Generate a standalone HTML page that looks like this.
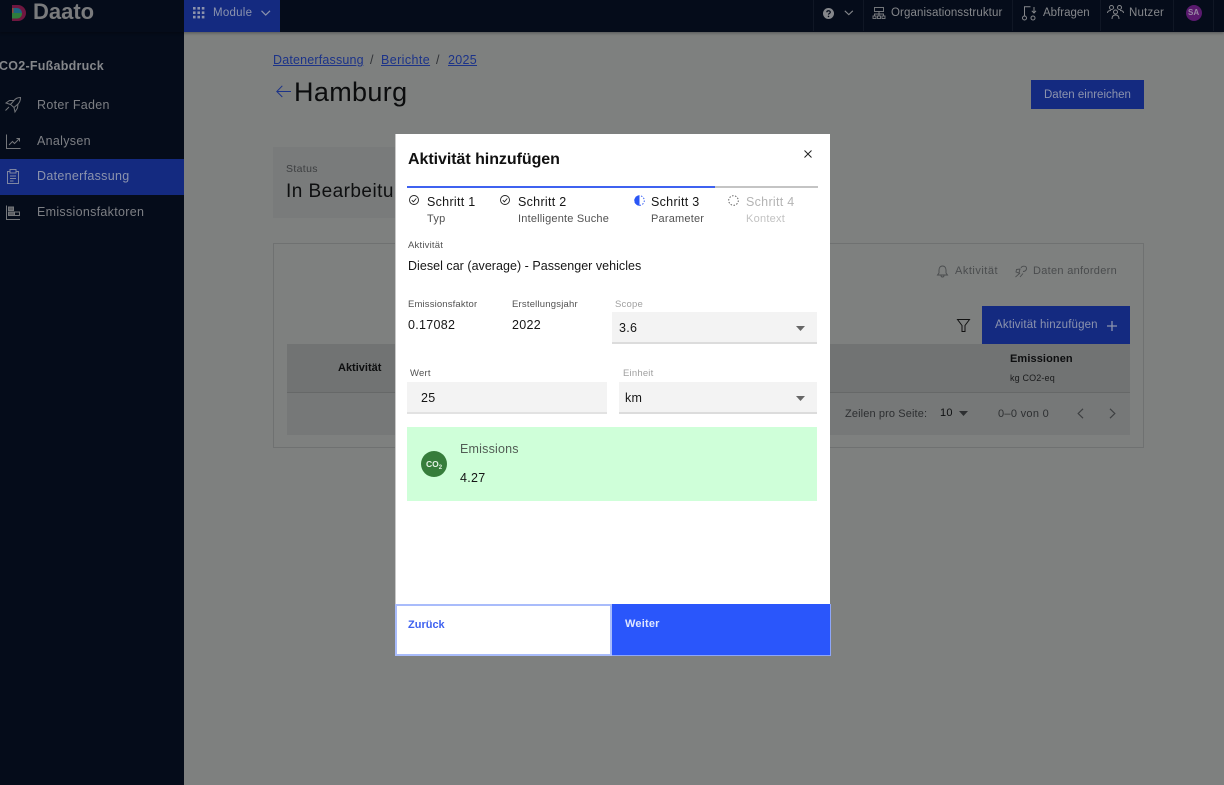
<!DOCTYPE html>
<html lang="de"><head><meta charset="utf-8"><title>Daato</title>
<style>
*{box-sizing:border-box}
html,body{margin:0;padding:0;width:1224px;height:785px;overflow:hidden;background:#7e807f}
body{font-family:"Liberation Sans",sans-serif;position:relative}
.t{position:absolute;white-space:nowrap;line-height:1}
.b{position:absolute}
svg{position:absolute;overflow:visible}
</style></head><body>

<!-- Background page -->
<div class="b" style="left:0;top:0;width:184px;height:785px;background:#050c1a"></div>
<div class="b" style="left:0;top:0;width:1224px;height:32px;background:#050c1a;box-shadow:0 1px 3px rgba(0,0,0,.35)"></div>
<div class="b" style="left:184px;top:0;width:96px;height:32px;background:#142a80"></div>

<!-- logo -->
<svg style="left:12px;top:5px" width="14" height="16" viewBox="0 0 14 16">
<path d="M0 0H6A8 8 0 0 1 6 16H0Z" fill="#6f1740"/>
<path d="M0 3H5A5 5 0 0 1 10 8H0Z" fill="#1d6480"/>
<path d="M0 8H10A5 5 0 0 1 5 13.500H0Z" fill="#2f7d3c"/>
<path d="M0 3H1.500V8H0Z" fill="#8f4a34"/>
</svg>
<div class="t" style="left:33px;top:1px;font-size:22px;font-weight:700;color:#7a7b7d">Daato</div>

<!-- module -->
<svg style="left:193px;top:7px" width="12" height="12" fill="#8c93ad">
<rect x="0" y="0" width="2.600" height="2.600"/><rect x="4.400" y="0" width="2.600" height="2.600"/><rect x="8.800" y="0" width="2.600" height="2.600"/>
<rect x="0" y="4.400" width="2.600" height="2.600"/><rect x="4.400" y="4.400" width="2.600" height="2.600"/><rect x="8.800" y="4.400" width="2.600" height="2.600"/>
<rect x="0" y="8.800" width="2.600" height="2.600"/><rect x="4.400" y="8.800" width="2.600" height="2.600"/><rect x="8.800" y="8.800" width="2.600" height="2.600"/>
</svg>
<div class="t" style="left:213px;top:8px;font-size:11.500px;letter-spacing:.25px;color:#8c93ad">Module</div>
<svg style="left:261px;top:10px" width="10" height="6" fill="none" stroke="#8c93ad" stroke-width="1.200"><path d="M.5 .8 4.700 5 9 .8"/></svg>

<!-- top-right -->
<div class="b" style="left:813px;top:0;width:1px;height:31px;background:#101725"></div>
<div class="b" style="left:863px;top:0;width:1px;height:31px;background:#101725"></div>
<div class="b" style="left:1012px;top:0;width:1px;height:31px;background:#101725"></div>
<div class="b" style="left:1100px;top:0;width:1px;height:31px;background:#101725"></div>
<div class="b" style="left:1173px;top:0;width:1px;height:31px;background:#101725"></div>
<div class="b" style="left:1213px;top:0;width:1px;height:31px;background:#101725"></div>
<svg style="left:823px;top:8px" width="11" height="11"><circle cx="5.500" cy="5.500" r="5.500" fill="#85878b"/><path d="M3.800 4.300C3.800 2.200 7.300 2.300 7.300 4.200 7.300 5.400 5.500 5.400 5.500 6.600" fill="none" stroke="#050c1a" stroke-width="1.200"/><circle cx="5.500" cy="8.400" r=".8" fill="#050c1a"/></svg>
<svg style="left:844px;top:10px" width="10" height="6" fill="none" stroke="#85878b" stroke-width="1.100"><path d="M.8 .8 4.800 4.600 8.800 .8"/></svg>
<svg style="left:873px;top:7px" width="12" height="12" fill="none" stroke="#7f8184" stroke-width=".9">
<rect x="1.500" y=".5" width="9" height="4"/><path d="M6 4.500V7M1.500 9V7H10.500V9M6 7V9"/><rect x="0" y="9" width="3" height="2.500"/><rect x="4.500" y="9" width="3" height="2.500"/><rect x="9" y="9" width="3" height="2.500"/></svg>
<div class="t" style="left:891px;top:8px;font-size:11.500px;letter-spacing:.1px;color:#85878b">Organisationsstruktur</div>
<svg style="left:1022px;top:6px" width="14" height="15" fill="none" stroke="#85878b" stroke-width="1">
<path d="M2.500 9.500V.8H8.500M12 1V7M9.800 4.800 12 7 14 4.800"/><circle cx="2.500" cy="12" r="2"/><circle cx="11" cy="12" r="2"/></svg>
<div class="t" style="left:1043px;top:8px;font-size:11.500px;letter-spacing:0;color:#85878b">Abfragen</div>
<svg style="left:1107px;top:5px" width="17" height="15" fill="none" stroke="#85878b" stroke-width="1">
<circle cx="4.500" cy="2.500" r="2"/><circle cx="12.500" cy="2.500" r="2"/><circle cx="8.500" cy="7" r="2"/><path d="M.5 8C.5 6 2 5.500 4 5.500M16.500 8C16.500 6 15 5.500 13 5.500M5 14C5 11 6.500 10 8.500 10S12 11 12 14"/></svg>
<div class="t" style="left:1129px;top:8px;font-size:11.500px;letter-spacing:.2px;color:#85878b">Nutzer</div>
<div class="b" style="left:1186px;top:5px;width:16px;height:16px;border-radius:50%;background:#5a1a6e"></div>
<div class="t" style="left:1188px;top:9px;font-size:8px;font-weight:700;color:#9a8aa4">SA</div>

<!-- sidebar -->
<div class="t" style="left:-1px;top:60px;font-size:12.500px;font-weight:700;letter-spacing:.25px;color:#85878b">CO2-Fußabdruck</div>
<div class="b" style="left:0;top:159px;width:184px;height:36px;background:#142a80"></div>
<div class="t" style="left:37px;top:99px;font-size:12.500px;letter-spacing:.3px;color:#7d7f84">Roter Faden</div>
<div class="t" style="left:37px;top:135px;font-size:12.500px;letter-spacing:.3px;color:#7d7f84">Analysen</div>
<div class="t" style="left:37px;top:170px;font-size:12.500px;letter-spacing:.3px;color:#8c93ad">Datenerfassung</div>
<div class="t" style="left:37px;top:206px;font-size:12.500px;letter-spacing:.3px;color:#7d7f84">Emissionsfaktoren</div>
<svg style="left:5px;top:97px" width="16" height="16" fill="none" stroke="#75777b" stroke-width="1"><path d="M15.500 .5C12.500 .5 10.500 1.500 9 3.500L5.500 7.500 9 10.500 13 7C15 5 15.500 3 15.500 .5ZM5.500 7.500 1 6 4.500 3.500H9M9 10.500 10 15 12.500 11 13 7M4 10 .5 13.500"/></svg>
<svg style="left:6px;top:134px" width="15" height="15" fill="none" stroke="#75777b" stroke-width="1"><path d="M.5 .5V14.500H14.500"/><path d="M3 11 6.500 7.500 8.500 9.500 13.500 4.500M10.500 4.500H13.500V7.500"/></svg>
<svg style="left:7px;top:169px" width="13" height="15" fill="none" stroke="#7f86a2" stroke-width="1"><rect x=".5" y="2.500" width="11" height="12"/><rect x="3" y=".5" width="6" height="3.500" fill="#142a80"/><path d="M3 7H9M3 9.500H9M3 12H6.500"/></svg>
<svg style="left:6px;top:205px" width="14" height="15" fill="none" stroke="#75777b" stroke-width="1"><path d="M.5 .5V14.500H14"/><rect x="2.500" y="2" width="5" height="3.500" fill="#5c5e63"/><rect x="2.500" y="7" width="11" height="3.500"/><rect x="2.500" y="7" width="6" height="3.500" fill="#5c5e63"/></svg>

<!-- breadcrumb -->
<div class="t" style="left:273px;top:54px;font-size:12.500px;letter-spacing:.18px;color:#1c3389;text-decoration:underline">Datenerfassung</div>
<div class="t" style="left:370px;top:54px;font-size:12.500px;color:#303236">/</div>
<div class="t" style="left:381px;top:54px;font-size:12.500px;letter-spacing:.4px;color:#1c3389;text-decoration:underline">Berichte</div>
<div class="t" style="left:436px;top:54px;font-size:12.500px;color:#303236">/</div>
<div class="t" style="left:448px;top:54px;font-size:12.500px;letter-spacing:.3px;color:#1c3389;text-decoration:underline">2025</div>
<svg style="left:276px;top:85px" width="15" height="13" fill="none" stroke="#1c3389" stroke-width="1"><path d="M15 6.500H.8M6.300 .8 .8 6.500 6.300 12"/></svg>
<div class="t" style="left:294px;top:79px;font-size:27px;letter-spacing:.35px;color:#0b0c0d">Hamburg</div>
<div class="b" style="left:1031px;top:80px;width:113px;height:29px;background:#142a80"></div>
<div class="t" style="left:1044px;top:90px;font-size:11.500px;letter-spacing:0;color:#8c93ad">Daten einreichen</div>

<!-- status -->
<div class="b" style="left:273px;top:147px;width:130px;height:71px;background:#797b7b"></div>
<div class="t" style="left:286px;top:164px;font-size:10.500px;letter-spacing:.35px;color:#3c3e40">Status</div>
<div class="t" style="left:286px;top:182px;font-size:19px;letter-spacing:.45px;color:#0e0f10">In Bearbeitung</div>

<!-- table card -->
<div class="b" style="left:273px;top:243px;width:871px;height:205px;border:1px solid #6f7171"></div>
<div class="b" style="left:287px;top:344px;width:843px;height:48px;background:#717373"></div>
<div class="b" style="left:287px;top:392px;width:843px;height:1px;background:#666868"></div>
<div class="b" style="left:287px;top:393px;width:843px;height:42px;background:#767878"></div>
<div class="t" style="left:338px;top:363px;font-size:11px;font-weight:700;color:#0d0e0f">Aktivität</div>
<div class="t" style="left:1010px;top:354px;font-size:11px;font-weight:700;letter-spacing:.1px;color:#0d0e0f">Emissionen</div>
<div class="t" style="left:1010px;top:374px;font-size:9px;letter-spacing:.15px;color:#1a1b1c">kg CO2-eq</div>

<svg style="left:937px;top:265px" width="11" height="13" fill="none" stroke="#4a4c4e" stroke-width=".9"><path d="M.5 10H10.500L9 8V5C9 2.500 7.500 1 5.500 1S2 2.500 2 5V8ZM4 10.500C4 12.500 7 12.500 7 10.500"/></svg>
<div class="t" style="left:955px;top:266px;font-size:11px;letter-spacing:.5px;color:#4a4c4e">Aktivität</div>
<svg style="left:1015px;top:265px" width="12" height="13" fill="none" stroke="#4a4c4e" stroke-width=".9"><path d="M6 3C7 .5 11.500 .5 11.500 3.500 11.500 6 9 6.500 8 6.500M1.500 4.500 5 4 4 8 1 7ZM.5 12 5 8M5 12 8 8.500"/></svg>
<div class="t" style="left:1033px;top:266px;font-size:11px;letter-spacing:.3px;color:#4a4c4e">Daten anfordern</div>

<svg style="left:957px;top:319px" width="13" height="13" fill="none" stroke="#111" stroke-width="1"><path d="M.5 .5H12.500L8 6.500V12.500H5V6.500Z"/></svg>
<div class="b" style="left:982px;top:306px;width:148px;height:38px;background:#142a80"></div>
<div class="t" style="left:995px;top:320px;font-size:11.500px;letter-spacing:.15px;color:#8c93ad">Aktivität hinzufügen</div>
<svg style="left:1107px;top:321px" width="10" height="10" stroke="#8c93ad" stroke-width="1.300"><path d="M5 0V10M0 5H10"/></svg>

<div class="t" style="left:845px;top:409px;font-size:11px;letter-spacing:.12px;color:#2d2f31">Zeilen pro Seite:</div>
<div class="t" style="left:940px;top:408px;font-size:11px;letter-spacing:.3px;color:#0f1011">10</div>
<svg style="left:959px;top:411px" width="9" height="5" fill="#2d2f31"><path d="M0 0H9L4.500 5Z"/></svg>
<div class="t" style="left:998px;top:409px;font-size:11px;letter-spacing:.3px;color:#2d2f31">0–0 von 0</div>
<svg style="left:1077px;top:408px" width="7" height="11" fill="none" stroke="#3d3f41" stroke-width="1.200"><path d="M6 .8 1.200 5.500 6 10.200"/></svg>
<svg style="left:1109px;top:408px" width="7" height="11" fill="none" stroke="#3d3f41" stroke-width="1.200"><path d="M1 .8 5.800 5.500 1 10.200"/></svg>

<!-- Modal -->
<div class="b" style="left:396px;top:134px;width:434px;height:522px;background:#fff"></div>
<div class="t" style="left:408px;top:152px;font-size:16px;font-weight:700;letter-spacing:-.05px;color:#111">Aktivität hinzufügen</div>
<svg style="left:804px;top:150px" width="8" height="8" stroke="#222" stroke-width="1"><path d="M.5 .5 7.500 7.500M7.500 .5 .5 7.500"/></svg>

<div class="b" style="left:407px;top:186px;width:411px;height:2px;background:#c4c4c4"></div>
<div class="b" style="left:407px;top:186px;width:308px;height:2px;background:#3f62f0"></div>

<svg style="left:409px;top:195px" width="10" height="10" fill="none" stroke="#222" stroke-width=".9"><circle cx="5" cy="5" r="4.500"/><path d="M2.800 5.200 4.400 6.800 7.300 3.500"/></svg>
<div class="t" style="left:427px;top:196px;font-size:12.500px;letter-spacing:.3px;color:#161616">Schritt 1</div>
<div class="t" style="left:427px;top:214px;font-size:11px;letter-spacing:.25px;color:#525252">Typ</div>

<svg style="left:500px;top:195px" width="10" height="10" fill="none" stroke="#222" stroke-width=".9"><circle cx="5" cy="5" r="4.500"/><path d="M2.800 5.200 4.400 6.800 7.300 3.500"/></svg>
<div class="t" style="left:518px;top:196px;font-size:12.500px;letter-spacing:.3px;color:#161616">Schritt 2</div>
<div class="t" style="left:518px;top:214px;font-size:11px;letter-spacing:.2px;color:#525252">Intelligente Suche</div>

<svg style="left:634px;top:195px" width="11" height="11"><path d="M5.500 .3A5.200 5.200 0 0 0 5.500 10.700Z" fill="#2a56f5"/><circle cx="5.500" cy="5.500" r="4.800" fill="none" stroke="#2a56f5" stroke-width=".9" stroke-dasharray="1.500 1.500"/></svg>
<div class="t" style="left:651px;top:196px;font-size:12.500px;letter-spacing:.3px;color:#161616">Schritt 3</div>
<div class="t" style="left:651px;top:214px;font-size:11px;letter-spacing:.2px;color:#525252">Parameter</div>

<svg style="left:728px;top:195px" width="11" height="11"><circle cx="5.500" cy="5.500" r="4.800" fill="none" stroke="#555" stroke-width=".9" stroke-dasharray="1.500 1.500"/></svg>
<div class="t" style="left:746px;top:196px;font-size:12.500px;letter-spacing:.3px;color:#b4b4b4">Schritt 4</div>
<div class="t" style="left:746px;top:214px;font-size:11px;letter-spacing:.25px;color:#c2c2c2">Kontext</div>

<div class="t" style="left:408px;top:241px;font-size:9.500px;letter-spacing:.2px;color:#525252">Aktivität</div>
<div class="t" style="left:408px;top:260px;font-size:12.500px;letter-spacing:.03px;color:#161616">Diesel car (average) - Passenger vehicles</div>

<div class="t" style="left:408px;top:300px;font-size:9.500px;letter-spacing:.15px;color:#525252">Emissionsfaktor</div>
<div class="t" style="left:408px;top:319px;font-size:12.500px;letter-spacing:.3px;color:#161616">0.17082</div>
<div class="t" style="left:512px;top:300px;font-size:9.500px;letter-spacing:.2px;color:#525252">Erstellungsjahr</div>
<div class="t" style="left:512px;top:319px;font-size:12.500px;letter-spacing:.3px;color:#161616">2022</div>

<div class="t" style="left:615px;top:300px;font-size:9.500px;letter-spacing:.2px;color:#a0a0a0">Scope</div>
<div class="b" style="left:612px;top:312px;width:205px;height:32px;background:#f3f3f3;border-bottom:2px solid #dcdcdc"></div>
<div class="t" style="left:619px;top:322px;font-size:12.500px;letter-spacing:.3px;color:#161616">3.6</div>
<svg style="left:796px;top:326px" width="9" height="5" fill="#666"><path d="M0 0H9L4.500 5Z"/></svg>

<div class="t" style="left:410px;top:369px;font-size:9.500px;letter-spacing:.2px;color:#525252">Wert</div>
<div class="b" style="left:407px;top:382px;width:200px;height:32px;background:#f3f3f3;border-bottom:2px solid #e2e2e2"></div>
<div class="t" style="left:421px;top:392px;font-size:12.500px;letter-spacing:.3px;color:#161616">25</div>

<div class="t" style="left:623px;top:369px;font-size:9.500px;letter-spacing:.2px;color:#a0a0a0">Einheit</div>
<div class="b" style="left:619px;top:382px;width:198px;height:32px;background:#f3f3f3;border-bottom:2px solid #dcdcdc"></div>
<div class="t" style="left:625px;top:392px;font-size:12.500px;letter-spacing:.3px;color:#161616">km</div>
<svg style="left:796px;top:396px" width="9" height="5" fill="#666"><path d="M0 0H9L4.500 5Z"/></svg>

<div class="b" style="left:407px;top:427px;width:410px;height:74px;background:#cfffd9"></div>
<div class="b" style="left:421px;top:451px;width:26px;height:26px;border-radius:50%;background:#367d3b"></div>
<div class="t" style="left:426px;top:460px;font-size:8.500px;font-weight:700;color:#e4f2e5">CO<span style="font-size:6px;position:relative;top:2px">2</span></div>
<div class="t" style="left:460px;top:443px;font-size:12.500px;letter-spacing:.2px;color:#525d55">Emissions</div>
<div class="t" style="left:460px;top:472px;font-size:12.500px;letter-spacing:.3px;color:#161616">4.27</div>

<!-- buttons -->
<div class="b" style="left:395px;top:604px;width:217px;height:52px;background:#fff;border:2px solid #a9bcfb"></div>
<div class="t" style="left:408px;top:620px;font-size:11px;font-weight:700;letter-spacing:0;color:#3f62f0">Zurück</div>
<div class="b" style="left:612px;top:604px;width:219px;height:52px;background:#2a56fb;border:1px solid #8ea6fa;border-top:0;border-left:0"></div>
<div class="t" style="left:625px;top:619px;font-size:11px;font-weight:700;letter-spacing:.2px;color:#dfe6ff">Weiter</div>
<div class="b" style="left:395px;top:134px;width:1px;height:470px;background:#c8c8c8"></div>
</body></html>
